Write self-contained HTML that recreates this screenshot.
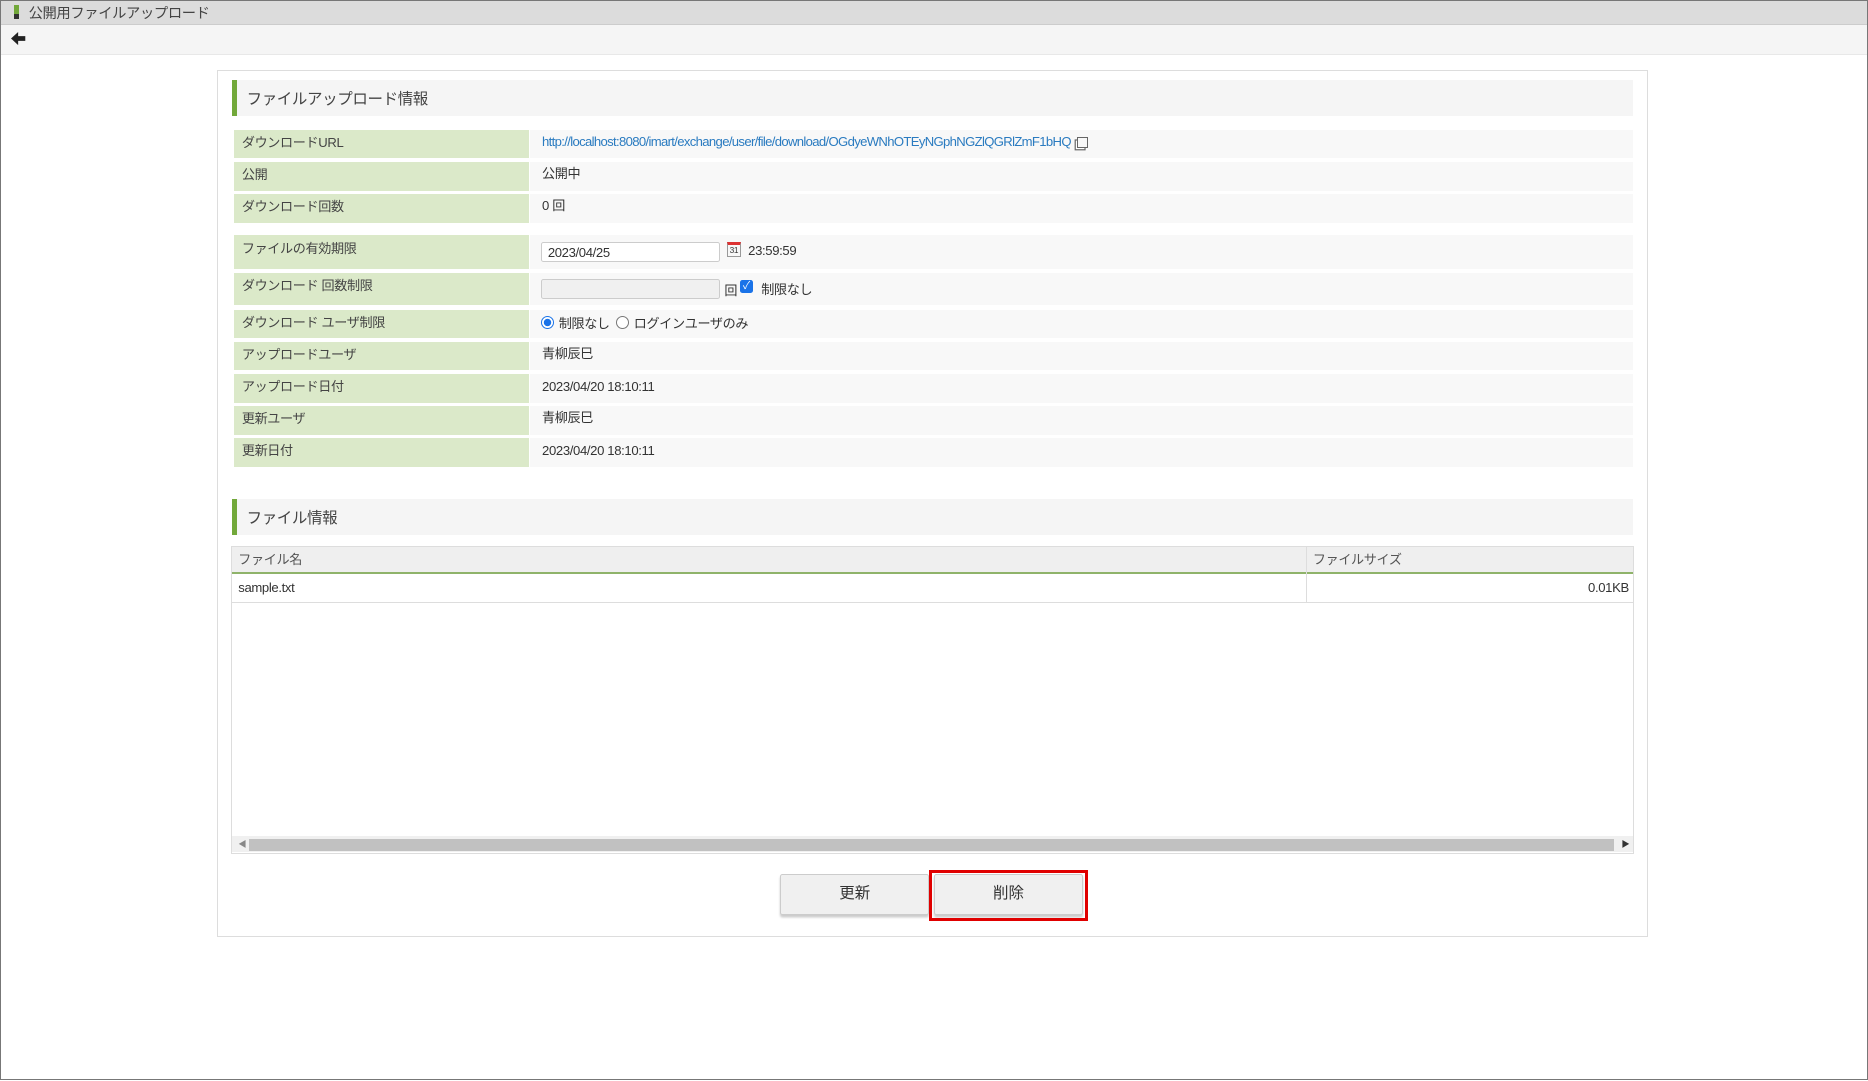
<!DOCTYPE html>
<html><head><meta charset="utf-8"><style>
html,body{margin:0;padding:0}
body{width:1568px;height:907px;zoom:1.19133;position:relative;overflow:hidden;background:#fff;font-family:"Liberation Sans","Noto Sans CJK JP",sans-serif;color:#333;font-size:11px}
.a{position:absolute}
.frame{left:0;top:0;width:1566px;height:905px;border:1px solid #777}
.title{left:1px;top:1px;width:1566px;height:19px;background:#dcdcdc;border-bottom:1px solid #ccc}
.tool{left:1px;top:21px;width:1566px;height:24px;background:#f5f5f5;border-bottom:1px solid #e8e8e8}
.panel{left:182px;top:59px;width:1200px;height:726px;border:1px solid #ddd;background:#fff}
.sh{left:195px;width:1176px;height:30px;background:#f5f5f5}
.sh:before{content:"";position:absolute;left:0;top:0;width:4px;height:30px;background:#72a83a}
.sh span{position:absolute;left:12px;top:6px;font-size:13px;color:#444;letter-spacing:-0.3px}
.lab{left:196px;width:248px;background:#dbe9c9;font-size:11px;color:#444;padding-left:7px;box-sizing:border-box;letter-spacing:-0.3px}
.val{left:445px;width:926px;background:#f8f8f8;font-size:11px;color:#333;padding-left:10px;box-sizing:border-box;letter-spacing:-0.3px}
.inp{border:1px solid #ccc;background:#fff;width:150px;height:17px;box-sizing:border-box;font-size:11px;padding-left:5px;line-height:16px;border-radius:2px}
.btn{height:34px;border:1px solid #ccc;background:#f0f0f0;box-sizing:border-box;text-align:center;line-height:32px;font-size:13px;color:#333;border-radius:2px;box-shadow:0 2px 2px #ccc}
</style></head><body>
<div class="a frame"></div>
<div class="a title"><div class="a" style="left:11px;top:3px;width:4px;height:12px;background:#72a83a"></div><div class="a" style="left:11px;top:11px;width:4px;height:4px;background:#333"></div><span class="a" style="left:23px;top:1px;font-size:12px;color:#444;letter-spacing:-0.3px">公開用ファイルアップロード</span></div>
<div class="a tool"><svg class="a" style="left:8px;top:6px" width="13" height="11" viewBox="0 0 13 11"><path d="M0 5.5L6 0V3.5H12V7.5H6V11Z" fill="#222"/></svg></div>
<div class="a panel"></div>
<div class="a sh" style="top:67px"><span>ファイルアップロード情報</span></div>

<div class="a lab" style="top:109px;height:24px;line-height:22px">ダウンロードURL</div>
<div class="a val" style="top:109px;height:24px;line-height:20px"><span style="color:#2a7bc0;letter-spacing:-0.55px">http://localhost:8080/imart/exchange/user/file/download/OGdyeWNhOTEyNGphNGZlQGRlZmF1bHQ</span> <span style="display:inline-block;width:8px;height:8px;border:1px solid #666;vertical-align:middle;margin-left:2px;box-shadow:-2px 2px 0 -1px #fff,-2px 2px 0 0 #666"></span></div>
<div class="a lab" style="top:136px;height:24px;line-height:21px">公開</div>
<div class="a val" style="top:136px;height:24px;line-height:20px">公開中</div>
<div class="a lab" style="top:163px;height:24px;line-height:21px">ダウンロード回数</div>
<div class="a val" style="top:163px;height:24px;line-height:20px">0 回</div>

<div class="a lab" style="top:197px;height:29px;line-height:24px">ファイルの有効期限</div>
<div class="a val" style="top:197px;height:29px"><div class="a inp" style="left:9px;top:6px">2023/04/25</div><div class="a" style="left:165px;top:6px;width:12px;height:13px;border:1px solid #999;border-top:3px solid #d33;box-sizing:border-box;font-size:7px;line-height:9px;text-align:center">31</div><span class="a" style="left:183px;top:7px">23:59:59</span></div>
<div class="a lab" style="top:229px;height:27px;line-height:22px">ダウンロード 回数制限</div>
<div class="a val" style="top:229px;height:27px"><div class="a inp" style="left:9px;top:5px;background:#f0f0f0"></div><span class="a" style="left:163px;top:6px">回</span><div class="a" style="left:176px;top:6px;width:11px;height:11px;background:#1a73e8;border-radius:2px;color:#fff;font-size:9px;line-height:11px;text-align:center">✓</div><span class="a" style="left:194px;top:5px">制限なし</span></div>
<div class="a lab" style="top:260px;height:24px;line-height:22px">ダウンロード ユーザ制限</div>
<div class="a val" style="top:260px;height:24px"><div class="a" style="left:9px;top:5px;width:11px;height:11px;border-radius:50%;border:1px solid #1a73e8;box-sizing:border-box;background:radial-gradient(#1a73e8 45%,#fff 50%)"></div><span class="a" style="left:24px;top:3px">制限なし</span><div class="a" style="left:72px;top:5px;width:11px;height:11px;border-radius:50%;border:1px solid #777;box-sizing:border-box;background:#fff"></div><span class="a" style="left:87px;top:3px">ログインユーザのみ</span></div>
<div class="a lab" style="top:287px;height:24px;line-height:22px">アップロードユーザ</div>
<div class="a val" style="top:287px;height:24px;line-height:20px">青柳辰巳</div>
<div class="a lab" style="top:314px;height:24px;line-height:22px">アップロード日付</div>
<div class="a val" style="top:314px;height:24px;line-height:22px">2023/04/20 18:10:11</div>
<div class="a lab" style="top:341px;height:24px;line-height:22px">更新ユーザ</div>
<div class="a val" style="top:341px;height:24px;line-height:20px">青柳辰巳</div>
<div class="a lab" style="top:368px;height:24px;line-height:22px">更新日付</div>
<div class="a val" style="top:368px;height:24px;line-height:22px">2023/04/20 18:10:11</div>

<div class="a sh" style="top:419px"><span>ファイル情報</span></div>
<div class="a" style="left:194px;top:458px;width:1176px;height:257px;border:1px solid #ddd;background:#fff"></div>
<div class="a" style="left:195px;top:459px;width:1176px;height:21px;background:#efefef;border-bottom:2px solid #8fb36a"></div>
<span class="a" style="left:200px;top:461px;color:#555;letter-spacing:-0.3px">ファイル名</span>
<span class="a" style="left:1102px;top:461px;color:#555;letter-spacing:-0.3px">ファイルサイズ</span>
<div class="a" style="left:1096px;top:459px;width:1px;height:46px;background:#ddd"></div>
<div class="a" style="left:195px;top:505px;width:1176px;height:1px;background:#ddd"></div>
<span class="a" style="left:200px;top:487px;letter-spacing:-0.3px">sample.txt</span>
<span class="a" style="left:1333px;top:487px;letter-spacing:-0.3px">0.01KB</span>
<div class="a" style="left:195px;top:702px;width:1176px;height:13px;background:#f0f0f0"></div>
<div class="a" style="left:209px;top:704px;width:1146px;height:10px;background:#c1c1c1"></div>
<span class="a" style="left:200px;top:703px;font-size:7px;color:#888">◀</span>
<span class="a" style="left:1361px;top:703px;font-size:7px;color:#333">▶</span>

<div class="a btn" style="left:655px;top:734px;width:125px">更新</div>
<div class="a btn" style="left:784px;top:734px;width:125px">削除</div>
<div class="a" style="left:780px;top:730px;width:133px;height:43px;border:3px solid #e00000;box-sizing:border-box"></div>
</body></html>
